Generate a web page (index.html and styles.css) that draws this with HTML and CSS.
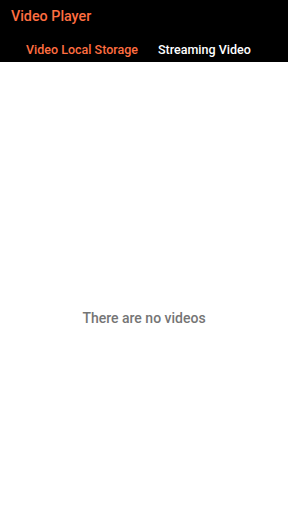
FILE: index.html
```html
<!DOCTYPE html>
<html lang="en">
<head>
    <meta charset="UTF-8">
    <meta name="viewport" content="width=device-width, initial-scale=1.0">
    <title>Video Player</title>
    <link rel="stylesheet" href="styles.css">
</head>
<body>
    <div class="app-bar">
        <div class="title">Video Player</div>
        <div class="tabs">
            <div class="tab active">Video Local Storage</div>
            <div class="tab">Streaming Video</div>
        </div>
    </div>

    <div class="empty">There are no videos</div>
</body>
</html>
```

FILE: styles.css
```css
html, body {
    margin: 0;
    height: 100%;
}
body {
    font-family: Roboto, "Liberation Sans", sans-serif;
    background: #fff;
    display: flex;
    flex-direction: column;
}
.app-bar {
    background: #000;
    height: 62px;
    flex-shrink: 0;
}
.title {
    color: #ff6e40;
    font-size: 14.3px;
    font-weight: 500;
    padding: 8px 0 0 11px;
    height: 25px;
}
.tabs {
    display: flex;
    gap: 20px;
    padding-left: 26px;
}
.tab {
    color: #fff;
    font-size: 12.5px;
    font-weight: 500;
    line-height: 34px;
}
.tab.active {
    color: #ff6e40;
}
.empty {
    flex: 1;
    display: flex;
    align-items: center;
    justify-content: center;
    color: #757575;
    font-size: 14px;
    font-weight: 500;
    padding-top: 61px;
}
```
